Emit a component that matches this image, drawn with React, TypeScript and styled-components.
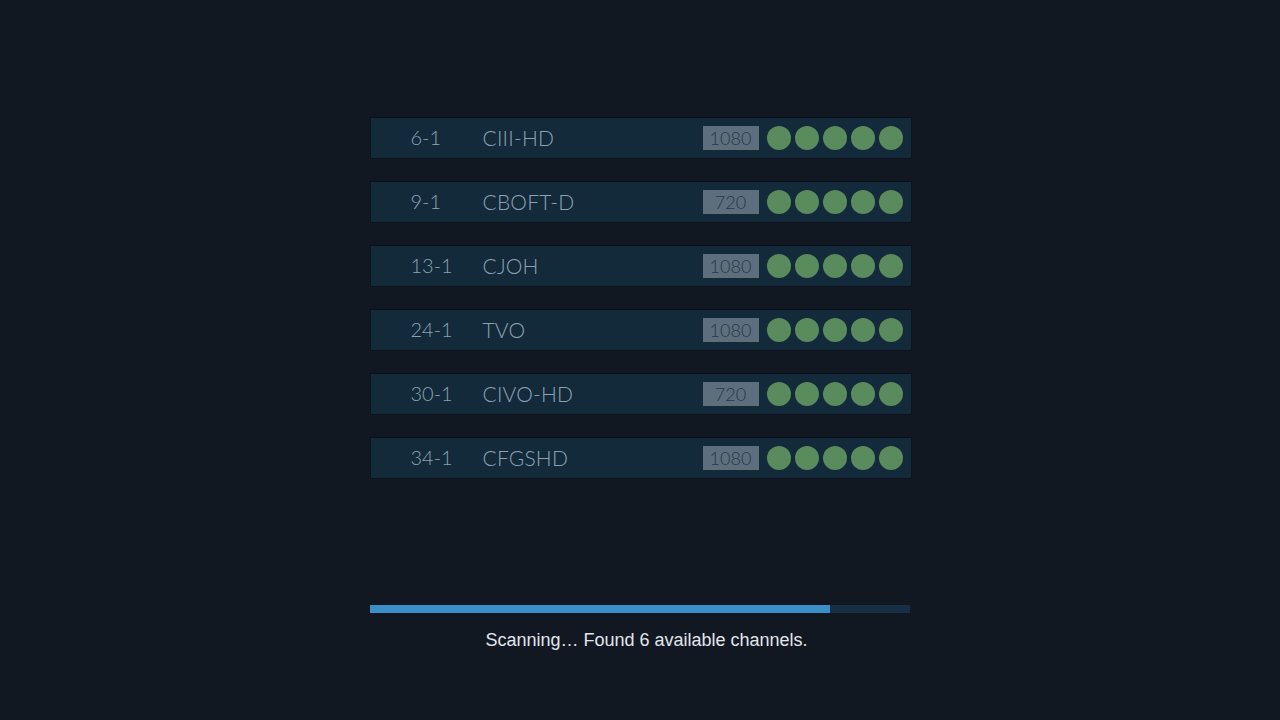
import styled, { createGlobalStyle } from 'styled-components';

const GlobalStyle = createGlobalStyle`
  html, body {
    margin: 0;
    padding: 0;
    background: #111822;
  }
  #root {
    min-height: 720px;
  }
`;

interface Channel {
  number: string;
  name: string;
  resolution: string;
  signal: number;
}

const channels: Channel[] = [
  { number: '6-1', name: 'CIII-HD', resolution: '1080', signal: 5 },
  { number: '9-1', name: 'CBOFT-D', resolution: '720', signal: 5 },
  { number: '13-1', name: 'CJOH', resolution: '1080', signal: 5 },
  { number: '24-1', name: 'TVO', resolution: '1080', signal: 5 },
  { number: '30-1', name: 'CIVO-HD', resolution: '720', signal: 5 },
  { number: '34-1', name: 'CFGSHD', resolution: '1080', signal: 5 },
];

const progress = 460 / 540;

export default function App() {
  return (
    <Page>
      <GlobalStyle />
      <ChannelList>
        {channels.map((ch) => (
          <ChannelRow key={ch.number}>
            <ChannelNumber>{ch.number}</ChannelNumber>
            <ChannelName>{ch.name}</ChannelName>
            <ResolutionBadge>{ch.resolution}</ResolutionBadge>
            <SignalMeter>
              {Array.from({ length: 5 }).map((_, i) => (
                <SignalDot key={i} active={i < ch.signal} />
              ))}
            </SignalMeter>
          </ChannelRow>
        ))}
      </ChannelList>
      <ScanFooter>
        <ProgressTrack>
          <ProgressFill style={{ width: `${progress * 100}%` }} />
        </ProgressTrack>
        <StatusText>Scanning… Found 6 available channels.</StatusText>
      </ScanFooter>
    </Page>
  );
}

const Page = styled.div`
  width: 1280px;
  height: 720px;
  display: flex;
  flex-direction: column;
  align-items: center;
  padding-top: 117px;
  box-sizing: border-box;
`;

const ChannelList = styled.div`
  display: flex;
  flex-direction: column;
  gap: 22px;
  width: 542px;
  margin-left: 1px;
`;

const ChannelRow = styled.div`
  display: flex;
  align-items: center;
  height: 42px;
  box-sizing: border-box;
  padding: 0 8px 0 40px;
  background: #132a3b;
  border: 1px solid #0c141d;
  border-top-color: #0a1119;
  font-family: Lato, 'Open Sans', sans-serif;
  font-weight: 300;
  font-size: 21px;
  color: #8da2b1;
`;

const ChannelNumber = styled.span`
  width: 72px;
  font-size: 20px;
  padding-bottom: 2px;
`;

const ChannelName = styled.span`
  flex: 1;
  letter-spacing: 0.2px;
  padding-bottom: 2px;
`;

const ResolutionBadge = styled.span`
  width: 56px;
  height: 24px;
  display: flex;
  align-items: center;
  justify-content: center;
  background: #5d6f7c;
  color: #26384a;
  font-size: 18px;
  margin-right: 8px;
`;

const SignalMeter = styled.div`
  display: flex;
  gap: 4px;
`;

const SignalDot = styled.span<{ active: boolean }>`
  width: 24px;
  height: 24px;
  border-radius: 50%;
  background: ${({ active }) => (active ? '#5a8b5d' : '#2b3d4b')};
`;

const ScanFooter = styled.div`
  margin-top: 126px;
  width: 540px;
  display: flex;
  flex-direction: column;
  align-items: center;
`;

const ProgressTrack = styled.div`
  width: 100%;
  height: 8px;
  background: #172f44;
`;

const ProgressFill = styled.div`
  height: 100%;
  background: #3a8fc9;
`;

const StatusText = styled.div`
  margin-top: 17px;
  padding-left: 13px;
  font-family: 'Liberation Sans', Arial, sans-serif;
  font-size: 18px;
  color: #e2e7ec;
`;
